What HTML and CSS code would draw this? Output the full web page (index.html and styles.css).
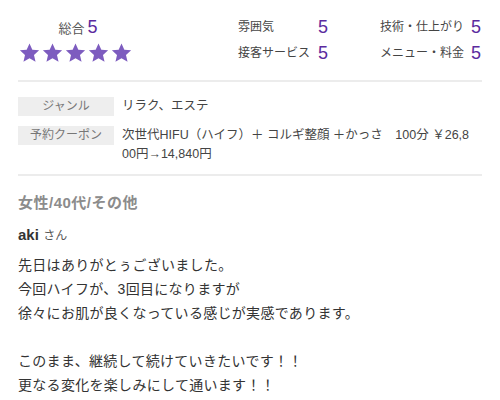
FILE: index.html
```html
<!DOCTYPE html>
<html lang="ja">
  <head>
    <meta charset="UTF-8">
    <title>口コミ</title>
    <link rel="stylesheet" href="styles.css">
  </head>
  <body>
    <div class="review">
      <div class="scores">
        <div class="total">
          <div class="total-label">総合<span class="num">5</span></div>
          <div class="stars">
            <svg viewBox="0 0 24 24"><path d="M12 1.5l3.1 6.9 7.4.7-5.6 5 1.7 7.4L12 17.6l-6.6 3.9 1.7-7.4-5.6-5 7.4-.7z"/></svg>
            <svg viewBox="0 0 24 24"><path d="M12 1.5l3.1 6.9 7.4.7-5.6 5 1.7 7.4L12 17.6l-6.6 3.9 1.7-7.4-5.6-5 7.4-.7z"/></svg>
            <svg viewBox="0 0 24 24"><path d="M12 1.5l3.1 6.9 7.4.7-5.6 5 1.7 7.4L12 17.6l-6.6 3.9 1.7-7.4-5.6-5 7.4-.7z"/></svg>
            <svg viewBox="0 0 24 24"><path d="M12 1.5l3.1 6.9 7.4.7-5.6 5 1.7 7.4L12 17.6l-6.6 3.9 1.7-7.4-5.6-5 7.4-.7z"/></svg>
            <svg viewBox="0 0 24 24"><path d="M12 1.5l3.1 6.9 7.4.7-5.6 5 1.7 7.4L12 17.6l-6.6 3.9 1.7-7.4-5.6-5 7.4-.7z"/></svg>
          </div>
        </div>
        <div class="items">
          <span class="item-label">雰囲気</span><span class="num">5</span>
          <span class="item-label">技術・仕上がり</span><span class="num">5</span>
          <span class="item-label">接客サービス</span><span class="num">5</span>
          <span class="item-label">メニュー・料金</span><span class="num">5</span>
        </div>
      </div>
      <dl class="info">
        <dt>ジャンル</dt>
        <dd>リラク、エステ</dd>
        <dt>予約クーポン</dt>
        <dd>次世代HIFU（ハイフ）＋ コルギ整顔 ＋かっさ　100分 ￥26,800円→14,840円</dd>
      </dl>
      <div class="attrs">女性/40代/その他</div>
      <div class="name"><b>aki</b> <span>さん</span></div>
      <p class="body">先日はありがとぅございました。<br>今回ハイフが、3回目になりますが<br>徐々にお肌が良くなっている感じが実感であります。<br><br>このまま、継続して続けていきたいです！！<br>更なる変化を楽しみにして通います！！</p>
    </div>
  </body>
</html>
```

FILE: styles.css
```css
body {
  margin: 0;
  background: #fff;
  color: #333;
  font-family: "Liberation Sans", "Noto Sans CJK JP", sans-serif;
}

.review {
  padding: 0 18px;
}

.scores {
  display: flex;
  padding: 16px 0 16px 0;
  border-bottom: 2px solid #ececec;
}

.total {
  width: 118px;
  text-align: center;
}

.total-label {
  font-size: 13px;
  line-height: 22px;
  color: #555;
  padding-left: 2px;
}

.num {
  color: #5b2a9e;
  font-size: 18px;
  margin-left: 3px;
}

.stars {
  display: flex;
  margin-top: 2px;
}

.stars svg {
  width: 23px;
  height: 22px;
  fill: #7d5cbf;
}

.items {
  display: grid;
  grid-template-columns: 80px 62px 91px auto;
  row-gap: 4px;
  margin-left: 102px;
  line-height: 22px;
}

.items .num {
  margin-left: 0;
}

.item-label {
  font-size: 12px;
  color: #444;
}

.info {
  display: grid;
  grid-template-columns: 96px 1fr;
  column-gap: 8px;
  row-gap: 10px;
  margin: 0;
  padding: 15px 0 10px 0;
  border-bottom: 2px solid #ececec;
  line-height: 19px;
}

.info dt {
  background: #eeeeee;
  color: #777;
  font-size: 12px;
  text-align: center;
  align-self: start;
}

.info dd {
  margin: 0;
  padding-right: 7px;
  font-size: 12.5px;
  color: #444;
  word-break: break-all;
}

.attrs {
  margin-top: 17px;
  font-size: 15px;
  line-height: 20px;
  color: #8c8c8c;
  font-weight: bold;
  letter-spacing: 0.5px;
}

.name {
  margin-top: 12px;
  line-height: 20px;
}

.name b {
  font-size: 15px;
  color: #333;
}

.name span {
  font-size: 12px;
  color: #555;
}

.body {
  margin: 7px 0 0 0;
  font-size: 14px;
  line-height: 24px;
  letter-spacing: 0.3px;
  color: #333;
}
```
